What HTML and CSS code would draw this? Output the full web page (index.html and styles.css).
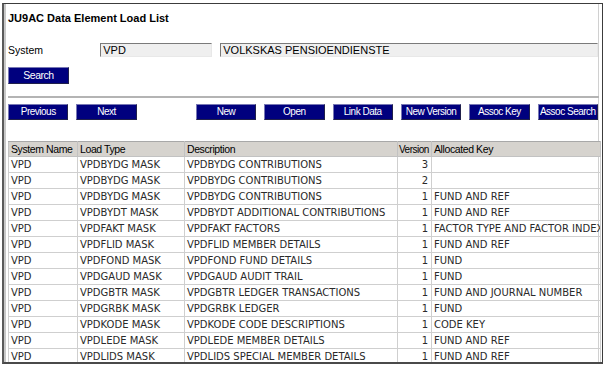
FILE: index.html
```html
<!DOCTYPE html>
<html>
<head>
<meta charset="utf-8">
<link rel="stylesheet" href="styles.css">
</head>
<body>
<div class="frame">
  <div class="title">JU9AC Data Element Load List</div>
  <div class="system-row">
    <span class="label">System</span>
    <span class="field f1">VPD</span>
    <span class="field f2">VOLKSKAS PENSIOENDIENSTE</span>
  </div>
  <div class="search-row"><span class="btn">Search</span></div>
  <div class="sep"></div>
  <div class="btn-row">
    <span class="btn">Previous</span>
    <span class="btn">Next</span>
    <span class="btn gap">New</span>
    <span class="btn">Open</span>
    <span class="btn">Link Data</span>
    <span class="btn">New Version</span>
    <span class="btn">Assoc Key</span>
    <span class="btn">Assoc Search</span>
  </div>
  <div class="table-wrap">
  <table class="grid">
    <colgroup>
      <col class="c1"><col class="c2"><col class="c3"><col class="c4"><col class="c5">
    </colgroup>
    <thead>
      <tr><th>System Name</th><th>Load Type</th><th>Description</th><th class="hnum">Version</th><th>Allocated Key</th></tr>
    </thead>
    <tbody>
      <tr><td>VPD</td><td>VPDBYDG MASK</td><td>VPDBYDG CONTRIBUTIONS</td><td class="num">3</td><td></td></tr>
      <tr><td>VPD</td><td>VPDBYDG MASK</td><td>VPDBYDG CONTRIBUTIONS</td><td class="num">2</td><td></td></tr>
      <tr><td>VPD</td><td>VPDBYDG MASK</td><td>VPDBYDG CONTRIBUTIONS</td><td class="num">1</td><td>FUND AND REF</td></tr>
      <tr><td>VPD</td><td>VPDBYDT MASK</td><td>VPDBYDT ADDITIONAL CONTRIBUTIONS</td><td class="num">1</td><td>FUND AND REF</td></tr>
      <tr><td>VPD</td><td>VPDFAKT MASK</td><td>VPDFAKT FACTORS</td><td class="num">1</td><td>FACTOR TYPE AND FACTOR INDEX</td></tr>
      <tr><td>VPD</td><td>VPDFLID MASK</td><td>VPDFLID MEMBER DETAILS</td><td class="num">1</td><td>FUND AND REF</td></tr>
      <tr><td>VPD</td><td>VPDFOND MASK</td><td>VPDFOND FUND DETAILS</td><td class="num">1</td><td>FUND</td></tr>
      <tr><td>VPD</td><td>VPDGAUD MASK</td><td>VPDGAUD AUDIT TRAIL</td><td class="num">1</td><td>FUND</td></tr>
      <tr><td>VPD</td><td>VPDGBTR MASK</td><td>VPDGBTR LEDGER TRANSACTIONS</td><td class="num">1</td><td>FUND AND JOURNAL NUMBER</td></tr>
      <tr><td>VPD</td><td>VPDGRBK MASK</td><td>VPDGRBK LEDGER</td><td class="num">1</td><td>FUND</td></tr>
      <tr><td>VPD</td><td>VPDKODE MASK</td><td>VPDKODE CODE DESCRIPTIONS</td><td class="num">1</td><td>CODE KEY</td></tr>
      <tr><td>VPD</td><td>VPDLEDE MASK</td><td>VPDLEDE MEMBER DETAILS</td><td class="num">1</td><td>FUND AND REF</td></tr>
      <tr><td>VPD</td><td>VPDLIDS MASK</td><td>VPDLIDS SPECIAL MEMBER DETAILS</td><td class="num">1</td><td>FUND AND REF</td></tr>
    </tbody>
  </table>
  </div>
</div>
</body>
</html>
```

FILE: styles.css
```css
html, body {
  margin: 0;
  padding: 0;
  background: #ffffff;
}
body {
  padding: 3px 4px 0 2px;
  font-family: "Liberation Sans", Arial, sans-serif;
  font-size: 11px;
  color: #000;
}
.frame {
  height: 358px;
  border: 1px solid #3c3c3c;
  border-left: 2px solid #5a5a5a;
  border-bottom: 2px solid #4a4a4a;
  box-shadow: inset 2px 0 0 #c8c8c8, inset -3px 0 0 #ffffff, inset -4px 0 0 #d0d0d0;
  overflow: hidden;
  padding-left: 3px;
  padding-right: 4px;
}
.title {
  font-weight: bold;
  font-size: 11px;
  margin-top: 8px;
  margin-left: 1px;
  height: 13px;
  line-height: 13px;
}
.system-row {
  display: flex;
  align-items: center;
  margin-top: 18px;
  height: 14px;
}
.label {
  width: 93px;
  margin-left: 1px;
  font-size: 10.5px;
}
.field {
  box-sizing: border-box;
  height: 14px;
  line-height: 12px;
  padding-left: 2px;
  background: #efefef;
  border-top: 1px solid #7a7a7a;
  border-left: 1px solid #7a7a7a;
  border-right: 1px solid #e8e8e8;
  border-bottom: 1px solid #e8e8e8;
  font-size: 11px;
}
.f1 { width: 113px; }
.f2 { width: 381px; margin-left: 8px; }
.search-row {
  margin-top: 10px;
  display: flex;
}
.btn {
  box-sizing: border-box;
  width: 61px;
  height: 17px;
  line-height: 15px;
  text-align: center;
  color: #ffffff;
  background: #00007e;
  border: 1px solid #7878b4;
  border-right-color: #20204a;
  border-bottom-color: #20204a;
  font-size: 10.5px;
  letter-spacing: -0.5px;
  white-space: nowrap;
  overflow: hidden;
  margin-left: 1px;
}
.sep {
  margin-top: 12px;
  margin-left: 1px;
  height: 2px;
  background: #b4b4b4;
  width: 591px;
}
.btn-row {
  display: flex;
  margin-top: 6px;
  gap: 7px;
}
.btn-row .btn {
  height: 16px;
  line-height: 14px;
  width: 61px;
  font-size: 10px;
}
.btn-row .btn.gap {
  margin-left: 52px;
}
.table-wrap {
  margin-top: 21px;
  margin-left: 1px;
}
.grid {
  border-collapse: collapse;
  table-layout: fixed;
  width: 592px;
}
.c1 { width: 69px; }
.c2 { width: 107px; }
.c3 { width: 213px; }
.c4 { width: 34px; }
.c5 { width: 169px; }
.grid th {
  background: #d6d3ce;
  font-weight: normal;
  text-align: left;
  font-family: "Liberation Sans", Arial, sans-serif;
  font-size: 10.5px;
  height: 14px;
  padding: 0 1px 0 2px;
  border: 1px solid #c2c2c2;
  border-top-color: #a8a8a8;
  letter-spacing: -0.4px;
  white-space: nowrap;
  overflow: hidden;
  line-height: 13px;
}
.grid th.hnum {
  padding: 0 0 0 1px;
  font-size: 10px;
  letter-spacing: -0.5px;
}
.grid td {
  font-family: "DejaVu Sans", Verdana, sans-serif;
  font-size: 10px;
  color: #2a2a2a;
  height: 15px;
  line-height: 15px;
  padding: 0 2px 0 2px;
  border: 1px solid #cfcfcf;
  white-space: nowrap;
  overflow: hidden;
}
.grid td.num {
  text-align: right;
  padding-right: 3px;
}
```
